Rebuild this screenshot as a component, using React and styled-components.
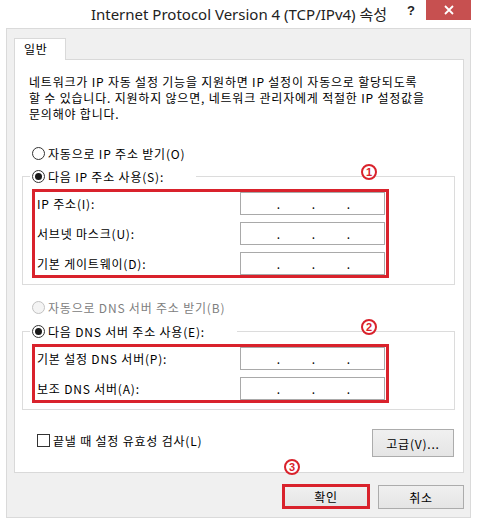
import React from 'react';
import styled, { createGlobalStyle } from 'styled-components';

const GlobalStyle = createGlobalStyle`
  html, body {
    margin: 0;
    padding: 0;
    background: #ffffff;
  }
  body {
    width: 478px;
    height: 523px;
    overflow: hidden;
    font-family: "Noto Sans CJK KR", "Noto Sans", sans-serif;
  }
  * {
    box-sizing: border-box;
  }
`;

const Window = styled.div`
  width: 478px;
  height: 523px;
  display: flex;
  flex-direction: column;
  background: #ffffff;
`;

const TitleBar = styled.div`
  height: 28px;
  display: grid;
  grid-template-columns: 1fr auto 1fr;
  align-items: start;
`;

const Title = styled.div`
  grid-column: 2;
  line-height: 28px;
  font-family: "Noto Sans", "Noto Sans CJK KR", sans-serif;
  font-size: 15px;
  color: #222;
  white-space: nowrap;
`;

const Controls = styled.div`
  grid-column: 3;
  justify-self: end;
  display: flex;
  margin-right: 7px;
`;

const HelpButton = styled.div`
  width: 30px;
  height: 20px;
  display: flex;
  align-items: center;
  justify-content: center;
  font-family: "Liberation Sans", sans-serif;
  font-weight: bold;
  font-size: 13px;
  color: #222;
`;

const CloseButton = styled.div`
  width: 45px;
  height: 20px;
  display: flex;
  align-items: center;
  justify-content: center;
  background: #c75050;
`;

const Body = styled.div`
  flex: 1;
  margin: 0 7px 6px 6px;
  background: #f0f0f0;
  border: 1px solid #dadada;
  padding: 9px 6px 8px 7px;
  display: flex;
  flex-direction: column;
  font-size: 12px;
  letter-spacing: 0.8px;
`;

const TabStrip = styled.div`
  display: flex;
  height: 21px;
`;

const Tab = styled.div`
  width: 52px;
  height: 22px;
  padding-left: 9px;
  border: 1px solid #d9d9d9;
  border-bottom: none;
  background: #ffffff;
  line-height: 20px;
  color: #000;
  position: relative;
  z-index: 1;
`;

const Panel = styled.div`
  height: 414px;
  background: #ffffff;
  border: 1px solid #d9d9d9;
  padding: 14px 8px 13px 7px;
  display: flex;
  flex-direction: column;
`;

const Description = styled.p`
  margin: 0 0 0 7px;
  line-height: 16px;
  color: #000;
  white-space: nowrap;
`;

const RadioRow = styled.label`
  display: flex;
  align-items: center;
  gap: 3px;
  height: 16px;
  margin: ${(p) => p.$mt || 0}px 0 0 10px;
  color: ${(p) => (p.$disabled ? '#808080' : '#000')};
  white-space: nowrap;
`;

const RadioCircle = styled.span`
  width: 13px;
  height: 13px;
  border-radius: 50%;
  border: 1px solid ${(p) => (p.$disabled ? '#c2c2c2' : '#333')};
  background: ${(p) => (p.$disabled ? '#f4f4f4' : '#fff')};
  display: flex;
  align-items: center;
  justify-content: center;
  flex-shrink: 0;

  &::after {
    content: '';
    width: 7px;
    height: 7px;
    border-radius: 50%;
    background: ${(p) => (p.$checked ? '#1a1a1a' : 'transparent')};
  }
`;

const Group = styled.fieldset`
  margin: ${(p) => p.$mt}px 0 0 0;
  border: 1px solid #dcdcdc;
  padding: 5px 0 6px 9px;
  min-width: 0;
`;

const Legend = styled.legend`
  padding: 0 32px 0 2px;
  margin-left: -2px;

  ${RadioRow} {
    margin: 0;
  }
`;

const RedBox = styled.div`
  position: relative;
  width: 357px;
  border: 3px solid #d9222c;
  padding: 0 1px 0 2px;
  display: flex;
  flex-direction: column;
  gap: 7px;
`;

const Marker = styled.span`
  position: absolute;
  top: ${(p) => p.$top}px;
  ${(p) => (p.$left !== undefined ? `left: ${p.$left}px;` : `right: ${p.$right}px;`)}
  width: 16px;
  height: 16px;
  border-radius: 50%;
  border: 2px solid #d9222c;
  background: #ffffff;
  color: #d9222c;
  font-family: "Liberation Sans", sans-serif;
  font-weight: bold;
  font-size: 11px;
  letter-spacing: 0;
  line-height: 12px;
  text-align: center;
`;

const FieldRow = styled.div`
  display: flex;
  align-items: center;
  justify-content: space-between;
  height: 23px;
`;

const FieldLabel = styled.span`
  color: #000;
  white-space: nowrap;
`;

const IpBox = styled.div`
  width: 145px;
  height: 23px;
  border: 1px solid #a9a9a9;
  background: #ffffff;
  display: flex;
  align-items: center;
  padding-left: 5px;
  letter-spacing: 0;
`;

const Segment = styled.span`
  width: 30px;
`;

const Dot = styled.span`
  width: 5px;
  text-align: center;
  line-height: 12px;
  color: #000;
`;

const BottomRow = styled.div`
  display: flex;
  justify-content: space-between;
  align-items: flex-start;
  margin-top: 19px;
  padding: 0 1px 0 15px;
`;

const CheckRow = styled.label`
  display: flex;
  align-items: center;
  gap: 3px;
  height: 16px;
  margin-top: 3px;
  color: #000;
  white-space: nowrap;
`;

const CheckBox = styled.span`
  width: 13px;
  height: 13px;
  border: 1px solid #333;
  background: #fff;
`;

const Button = styled.button`
  position: relative;
  overflow: visible;
  width: ${(p) => p.$w}px;
  height: ${(p) => p.$h}px;
  padding: 0;
  border: ${(p) => (p.$highlight ? '3px solid #d9222c' : '1px solid #acacac')};
  background: linear-gradient(#f0f0f0, #e5e5e5);
  font-family: "Noto Sans CJK KR", "Noto Sans", sans-serif;
  font-size: 12px;
  letter-spacing: 0.8px;
  color: #000;
`;

const ButtonRow = styled.div`
  display: flex;
  justify-content: flex-end;
  align-items: flex-end;
  gap: 8px;
  margin-top: 11px;
`;

function IpField() {
  return (
    <IpBox>
      <Segment />
      <Dot>.</Dot>
      <Segment />
      <Dot>.</Dot>
      <Segment />
      <Dot>.</Dot>
      <Segment />
    </IpBox>
  );
}

function Radio({ checked, disabled, children, mt }) {
  return (
    <RadioRow $disabled={disabled} $mt={mt}>
      <RadioCircle $checked={checked} $disabled={disabled} />
      {children}
    </RadioRow>
  );
}

const ipRows = ['IP 주소(I):', '서브넷 마스크(U):', '기본 게이트웨이(D):'];
const dnsRows = ['기본 설정 DNS 서버(P):', '보조 DNS 서버(A):'];

export default function App() {
  return (
    <Window>
      <GlobalStyle />
      <TitleBar>
        <Title>Internet Protocol Version 4 (TCP/IPv4) 속성</Title>
        <Controls>
          <HelpButton>?</HelpButton>
          <CloseButton>
            <svg width="10" height="10" viewBox="0 0 10 10">
              <path d="M1 1 L9 9 M9 1 L1 9" stroke="#fff" strokeWidth="1.8" />
            </svg>
          </CloseButton>
        </Controls>
      </TitleBar>

      <Body>
        <TabStrip>
          <Tab>일반</Tab>
        </TabStrip>
        <Panel>
          <Description>
            네트워크가 IP 자동 설정 기능을 지원하면 IP 설정이 자동으로 할당되도록
            <br />
            할 수 있습니다. 지원하지 않으면, 네트워크 관리자에게 적절한 IP 설정값을
            <br />
            문의해야 합니다.
          </Description>

          <Radio mt={23}>자동으로 IP 주소 받기(O)</Radio>
          <Group $mt={7}>
            <Legend>
              <Radio checked>다음 IP 주소 사용(S):</Radio>
            </Legend>
            <RedBox>
              <Marker $top={-28} $right={9}>1</Marker>
              {ipRows.map((label) => (
                <FieldRow key={label}>
                  <FieldLabel>{label}</FieldLabel>
                  <IpField />
                </FieldRow>
              ))}
            </RedBox>
          </Group>

          <Radio disabled mt={14}>자동으로 DNS 서버 주소 받기(B)</Radio>
          <Group $mt={8}>
            <Legend>
              <Radio checked>다음 DNS 서버 주소 사용(E):</Radio>
            </Legend>
            <RedBox>
              <Marker $top={-28} $right={9}>2</Marker>
              {dnsRows.map((label) => (
                <FieldRow key={label}>
                  <FieldLabel>{label}</FieldLabel>
                  <IpField />
                </FieldRow>
              ))}
            </RedBox>
          </Group>

          <BottomRow>
            <CheckRow>
              <CheckBox />
              끝낼 때 설정 유효성 검사(L)
            </CheckRow>
            <Button $w={82} $h={28}>고급(V)...</Button>
          </BottomRow>
        </Panel>

        <ButtonRow>
          <Button $w={88} $h={25} $highlight>
            <Marker $top={-28} $left={-1}>3</Marker>
            확인
          </Button>
          <Button $w={86} $h={24}>취소</Button>
        </ButtonRow>
      </Body>
    </Window>
  );
}
